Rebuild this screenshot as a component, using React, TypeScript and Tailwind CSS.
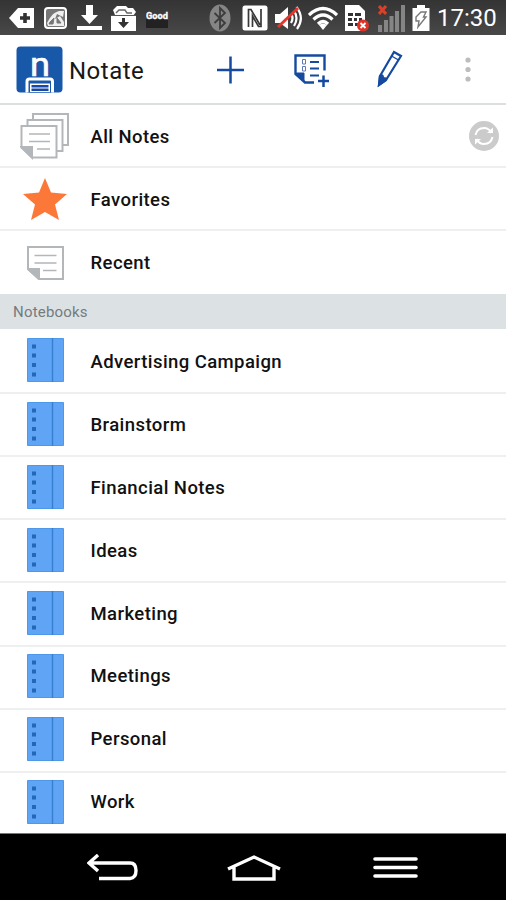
import type { ReactNode } from "react";

const notebooks = [
  "Advertising Campaign",
  "Brainstorm",
  "Financial Notes",
  "Ideas",
  "Marketing",
  "Meetings",
  "Personal",
  "Work",
];

function StatusBar() {
  return (
    <header className="flex h-[35px] shrink-0 items-center bg-gradient-to-b from-[#343434] to-[#484848] pl-[9px] text-white">
      <svg width="26" height="24" viewBox="0 0 26 24" className="shrink-0">
        <path d="M0 12 9 2H25V22H9Z" fill="#fff" />
        <path d="M16 7V17M11 12H21" stroke="#333" strokeWidth="3.6" />
      </svg>
      <svg width="24" height="24" viewBox="0 0 24 24" className="ml-[9px] shrink-0">
        <rect x="1" y="2" width="21" height="20" rx="3" fill="#777" stroke="#fff" strokeWidth="2" />
        <path d="M3 17C6 12 8 7 15 5L20 5 19 11 13 8 11 13 16 10 20 16V20H4Z" fill="#eee" />
        <path d="M5 8 10 5M6 16 10 12 9 18H5ZM13 12 17 17H13Z" stroke="#777" fill="#777" strokeWidth="1" />
      </svg>
      <svg width="26" height="26" viewBox="0 0 26 26" className="ml-[9px] shrink-0">
        <path d="M9 0H16V10H21L12.5 19 4 10H9Z" fill="#fff" />
        <path d="M0 21H25V25H0Z" fill="#fff" />
      </svg>
      <svg width="26" height="26" viewBox="0 0 26 26" className="ml-[8px] shrink-0">
        <path d="M4 10 2 5 6 1H15L17 3 22 3 25 7 22 11Z" fill="#fff" />
        <path d="M5 8 8 5H14L16 8H21" fill="none" stroke="#666" strokeWidth="1.4" />
        <path d="M0 11H25V26H0Z" fill="#fff" />
        <path d="M0 10.500H25" stroke="#555" strokeWidth="1" />
        <path d="M11 13H14V17H18L12.5 23 7 17H11Z" fill="#333" />
      </svg>
      <svg width="24" height="24" viewBox="0 0 24 24" className="ml-[9px] shrink-0">
        <path d="M0 13H22V22H0Z" fill="#222" />
        <text x="0" y="12.500" textLength="22" lengthAdjust="spacingAndGlyphs" fill="#fff" stroke="#fff" strokeWidth=".3" className="font-[Roboto,sans-serif] text-[9.5px] font-bold">
          Good
        </text>
      </svg>
      <svg width="22" height="28" viewBox="0 0 22 28" className="ml-[39px] shrink-0">
        <ellipse cx="11" cy="14" rx="10.5" ry="13.5" fill="#858585" />
        <path d="M5.5 9 16 19 11 24V4L16 9 5.5 19" fill="none" stroke="#3c3c3c" strokeWidth="1.8" />
      </svg>
      <svg width="26" height="26" viewBox="0 0 26 26" className="ml-[11px] shrink-0">
        <rect width="25" height="25" x="0.5" y="0.5" rx="2.5" fill="#fff" />
        <path d="M6.500 22V4.500H9L18 20M19 4V21.500H16.500L10.500 11V22" fill="none" stroke="#383838" strokeWidth="1.7" />
      </svg>
      <svg width="29" height="26" viewBox="0 0 29 26" className="ml-[6px] shrink-0">
        <path d="M1 9H6L14 2V24L6 18H1Z" fill="#fff" />
        <path d="M17 9Q20 13 17 18M20 6Q25 13 20 21M22.500 2Q31 13 23 24" fill="none" stroke="#fff" strokeWidth="2.200" />
        <path d="M4 22 24 3" stroke="#e5362b" strokeWidth="3" />
      </svg>
      <svg width="30" height="26" viewBox="0 0 30 26" className="ml-[5px] shrink-0">
        <path d="M1 10Q15 -3 29 10M5.500 14.500Q15 5.500 24.500 14.500M10 19Q15 14 20 19" fill="none" stroke="#fff" strokeWidth="3.2" />
        <path d="M11 20Q15 17 19 20L15 25Z" fill="#fff" />
      </svg>
      <svg width="25" height="28" viewBox="0 0 25 28" className="ml-[7px] shrink-0">
        <path d="M0 1H14L20 7V27H0Z" fill="#fff" />
        <path d="M3 9H8V12H3ZM10 9H16V12H10ZM3 14H7V17H3ZM9 14H12V17H9ZM14 14H17V17H14ZM3 19H8V22H3ZM10 19H14V22H10Z" fill="#333" />
        <circle cx="18" cy="21.500" r="6" fill="#df3328" />
        <path d="M15.500 19 20.500 24M20.500 19 15.500 24" stroke="#fff" strokeWidth="1.8" />
      </svg>
      <svg width="29" height="28" viewBox="0 0 29 28" className="ml-[7px] shrink-0">
        <path d="M1 21H5V28H1ZM7 16H11V28H7ZM12.500 12H16.500V28H12.500ZM18 7H22V28H18ZM24 1H28V28H24Z" fill="#858585" />
        <path d="M2 2 9 10M9 2 2 10" stroke="#dc4028" strokeWidth="3" />
      </svg>
      <svg width="18" height="28" viewBox="0 0 18 28" className="ml-[6px] shrink-0">
        <path d="M5 1H13V4H17.500V27H.5V4H5Z" fill="#fff" />
        <path d="M9 8H14L11.500 13H14L6 23 7 17H4V13Z" fill="none" stroke="#777" strokeWidth="1.400" />
      </svg>
      <span className="ml-[7px] pt-[2px] text-[24px] leading-[35px]">17:30</span>
    </header>
  );
}

function Toolbar() {
  return (
    <div className="flex h-[70px] shrink-0 items-center border-b-2 border-[#dcdfe0] bg-white pt-[1px] pl-[16px]">
      <svg width="47" height="47" viewBox="0 0 47 47" className="shrink-0">
        <rect width="46" height="46" x=".5" y=".5" rx="4" fill="#1758a9" />
        <text x="14" y="30" fill="#fff" stroke="#fff" strokeWidth=".6" textLength="20" lengthAdjust="spacingAndGlyphs" className="font-[Roboto,sans-serif] text-[33px]">
          n
        </text>
        <path d="M11 46.500V35.500Q11 33 13.500 33H34Q36.500 33 36.500 35.500V46.500" fill="#1758a9" stroke="#fff" strokeWidth="3" />
        <path d="M14 37.500H34V46H14Z" fill="#fff" />
        <path d="M15.500 39H32.500V41.500H15.500ZM15.500 42.500H32.500V45H15.500Z" fill="#1748a8" />
      </svg>
      <h1 className="ml-[6px] w-[141px] pt-[2px] text-[24px] leading-[32px] tracking-[0.5px] text-[#171717]">Notate</h1>
      <svg width="30" height="30" viewBox="0 0 30 30" className="ml-[6px] shrink-0 stroke-[#164aa0]">
        <path d="M1 15H28M14.500 1.500V28.500" strokeWidth="2.500" />
      </svg>
      <svg width="38" height="36" viewBox="0 0 38 36" className="ml-[47px] shrink-0" fill="none" stroke="#164aa0">
        <path d="M31.500 18.500V3.500H2.500V22L12 30.500H21" strokeWidth="2.400" />
        <path d="M2 21H11V30Z" fill="#164aa0" />
        <path d="M9.500 7.500H12.500V12H9.500ZM9.500 14.500H12.500V19H9.500Z" strokeWidth="1" stroke="#6179b5" />
        <path d="M17 10H26M17 16.500H26M17 23.500H26" strokeWidth="2" />
        <path d="M25 29H36M30.500 23.500V35" strokeWidth="2.500" />
      </svg>
      <svg width="26" height="38" viewBox="0 0 26 38" className="-mt-[2px] ml-[46px] shrink-0" fill="none" stroke="#164aa0" strokeWidth="2.200">
        <path d="M2 35 3 26 17 2 24 6 9 30Z" />
        <path d="M14.500 6 21.500 10" strokeWidth="1.400" />
        <path d="M2 35 3 26Q6 24 6 28 10 28 9 30Z" fill="#164aa0" />
      </svg>
      <svg width="8" height="28" viewBox="0 0 8 28" className="ml-[61px] shrink-0" fill="#bcbdbd">
        <circle cx="4" cy="4" r="2.600" />
        <circle cx="4" cy="13.500" r="2.600" />
        <circle cx="4" cy="23" r="2.600" />
      </svg>
    </div>
  );
}

function AllNotesIcon() {
  return (
    <svg width="50" height="48" viewBox="0 0 50 48" fill="#fff" stroke="#b3b7ba" strokeWidth="2">
      <path d="M13 2H48V33H13Z" />
      <path d="M7.500 8H42.500V39H7.500Z" />
      <path d="M1.500 14H36.500V45.500H12L1.500 35.500Z" />
      <path d="M1.500 35H12V45.500Z" fill="#b3b7ba" />
      <path d="M9 22H30M9 29.500H30M17 37H30" strokeWidth="1.500" />
    </svg>
  );
}

function RecentIcon() {
  return (
    <svg width="37" height="34" viewBox="0 0 37 34" className="mt-[2px]" fill="#fff" stroke="#b3b7ba" strokeWidth="2">
      <path d="M1 1H36V33H12L1 23Z" />
      <path d="M1 23H12V33Z" fill="#b3b7ba" />
      <path d="M7.500 9.500H29.500M7.500 17H29.500M16 24.500H29.500" strokeWidth="1.700" />
    </svg>
  );
}

function StarIcon() {
  return (
    <svg width="44" height="42" viewBox="0 0 44 42" fill="#fb7839">
      <path d="M22 0 28 14.500 44 16 32 26.500 36 42 22 34 8 42 12 26.500 0 16 16 14.500Z" />
    </svg>
  );
}

function NotebookIcon() {
  return (
    <svg width="37" height="44" viewBox="0 0 37 44" className="-mt-[2px]">
      <path d="M.5.5H36.500V43.500H.5Z" fill="#60a5f5" stroke="#4f97e9" />
      <path d="M25.500 0V44" stroke="#357fd3" strokeWidth="1.400" />
      <path d="M5 6.500H9V10.500H5ZM5 15.500H9V19.500H5ZM5 25H9V29H5ZM5 34.500H9V38.500H5Z" fill="#2168b8" />
    </svg>
  );
}

type RowProps = { icon: ReactNode; label: string; lift?: number; trailing?: ReactNode };

function Row({ icon, label, lift = 0, trailing }: RowProps) {
  return (
    <li className="flex h-[63.15px] shrink-0 items-center border-b-2 border-[#edeff0] bg-white last:border-b-transparent">
      <div className="flex w-[90.5px] shrink-0 justify-center">{icon}</div>
      <span
        className="grow pt-[2px] text-[18.5px] leading-[24px] font-medium tracking-[0.42px] text-[#111]"
        style={{ paddingBottom: lift }}
      >
        {label}
      </span>
      {trailing}
    </li>
  );
}

export default function App() {
  return (
    <div className="flex h-[900px] w-[506px] flex-col overflow-hidden bg-white font-[Roboto,sans-serif]">
      <StatusBar />
      <Toolbar />
      <main className="flex h-[728px] min-h-0 grow flex-col overflow-hidden">
        <ul className="shrink-0">
          <Row
            icon={<AllNotesIcon />}
            label="All Notes"
            trailing={
              <svg width="30" height="30" viewBox="0 0 30 30" className="mr-[7px] shrink-0" fill="none" stroke="#fff" strokeWidth="2">
                <circle cx="15" cy="15" r="15" fill="#cbcbcb" stroke="none" />
                <path d="M6.500 14Q8 7 15 7 20 7 22.500 12M23.500 16Q22 23 15 23 10 23 7.500 18" />
                <path d="M18 12H24V6.500ZM12 18H6V23.500Z" fill="#fff" stroke="none" />
              </svg>
            }
          />
          <Row icon={<StarIcon />} label="Favorites" />
          <Row icon={<RecentIcon />} label="Recent" />
        </ul>
        <h2 className="flex h-[35px] shrink-0 items-center bg-[#dce1e4] pl-[13px] text-[15px] tracking-[0.2px] text-[#747b7f]">
          Notebooks
        </h2>
        <ul className="shrink-0 pt-[1.4px]">
          {notebooks.map((name, i) => (
            <Row key={name} icon={<NotebookIcon />} label={name} lift={i * 0.7} />
          ))}
        </ul>
      </main>
      <nav className="flex h-[67px] shrink-0 items-center border-t border-[#777] bg-black pt-[1px] pl-[87px]">
        <svg width="52" height="28" viewBox="0 0 52 28" fill="none" stroke="#fff" strokeWidth="3.400">
          <path d="M11 1 2 9 11 17M2 9H43Q49 9 49 16.500T43 24.500H12" />
        </svg>
        <svg width="54" height="28" viewBox="0 0 54 28" className="ml-[88px]" fill="none" stroke="#fff" strokeWidth="3.400">
          <path d="M1 15 27 3 53 15M7 13V25H47V13" />
        </svg>
        <svg width="46" height="26" viewBox="0 0 46 26" className="ml-[92px]" stroke="#fff" strokeWidth="3.600" strokeLinecap="round">
          <path d="M2 4H43M2 12.500H43M2 21H43" />
        </svg>
      </nav>
    </div>
  );
}
